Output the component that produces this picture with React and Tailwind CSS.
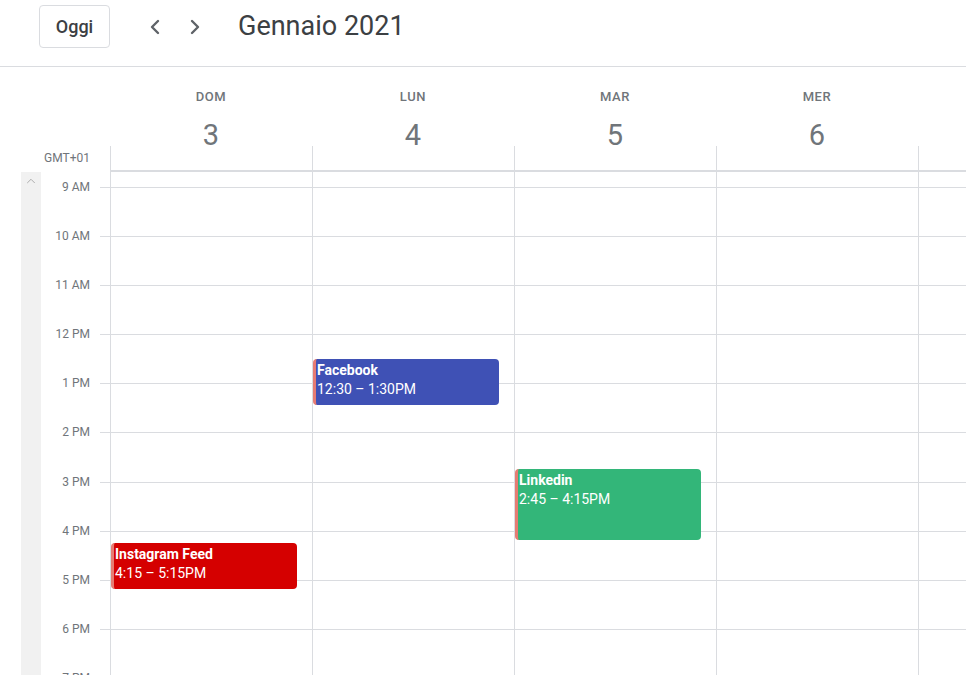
import React from 'react';
import { ChevronLeft, ChevronRight, ChevronUp } from 'lucide-react';

const HOUR = 49.1;

const days = [
    { label: 'DOM', num: 3 },
    { label: 'LUN', num: 4 },
    { label: 'MAR', num: 5 },
    { label: 'MER', num: 6 },
    { label: '', num: 7 }, // partly off screen, label not visible
];

const hours = ['9 AM', '10 AM', '11 AM', '12 PM', '1 PM', '2 PM', '3 PM', '4 PM', '5 PM', '6 PM', '7 PM'];

const events = [
    { day: 0, title: 'Instagram Feed', time: '4:15 – 5:15PM', start: 16.25, dur: 1, bg: 'bg-[#d50000]' },
    { day: 1, title: 'Facebook', time: '12:30 – 1:30PM', start: 12.5, dur: 1, bg: 'bg-[#3f51b5]' },
    { day: 2, title: 'Linkedin', time: '2:45 – 4:15PM', start: 14.75, dur: 1.5, bg: 'bg-[#33b679]' },
];

const EventCard = ({ ev }) => (
    <div
        className={`absolute left-0 w-[186px] rounded-[4px] border-l-[3px] border-[#e67c73] ${ev.bg} pl-[1px] pt-[2px] text-white text-[14px] leading-[19px]`}
        style={{ top: 15 + (ev.start - 9) * HOUR, height: ev.dur * HOUR - 3 }}
    >
        <div className="font-bold">{ev.title}</div>
        <div>{ev.time}</div>
    </div>
);

export default function App() {
    return (
        <div className="w-[966px] h-[675px] overflow-hidden bg-white font-['Roboto',sans-serif] text-[#3c4043]">
            {/* Top bar */}
            <div className="h-[67px] flex items-center pb-[13px] border-b border-[#dadce0]">
                <button className="ml-[39px] w-[71px] h-[43px] border border-[#dadce0] rounded-[4px] text-[18px] font-medium text-[#3c4043]">
                    Oggi
                </button>
                <div className="ml-[25px] flex items-center">
                    <span className="w-[40px] h-[40px] flex items-center justify-center text-[#5f6368]">
                        <ChevronLeft size={24} strokeWidth={2.4} />
                    </span>
                    <span className="w-[40px] h-[40px] flex items-center justify-center text-[#5f6368]">
                        <ChevronRight size={24} strokeWidth={2.4} />
                    </span>
                </div>
                <h1 className="ml-[23px] text-[27px] font-normal text-[#3c4043] leading-none">Gennaio 2021</h1>
            </div>

            {/* Day header */}
            <div className="flex h-[79px] whitespace-nowrap">
                <div className="w-[110px] shrink-0" />
                {days.filter(d => d.label).map(d => (
                    <div key={d.num} className="w-[202px] shrink-0 flex flex-col items-center">
                        <div className="mt-[23px] text-[13px] leading-[14px] font-medium tracking-[0.6px] text-[#70757a]">{d.label}</div>
                        <div className="mt-[17px] text-[29px] leading-[29px] text-[#70757a]">{d.num}</div>
                    </div>
                ))}
            </div>
            <div className="flex h-[26px] whitespace-nowrap">
                <div className="w-[110px] shrink-0 pr-[20px] text-right text-[12px] leading-[24px] text-[#70757a]">GMT+01</div>
                {days.map(d => (
                    <div key={d.num} className="w-[202px] shrink-0 border-l border-b-2 border-[#dadce0]" />
                ))}
            </div>

            {/* Grid body */}
            <div className="flex whitespace-nowrap">
                <div className="w-[110px] shrink-0 flex">
                    <div className="ml-[21px] w-[20px] h-[520px] bg-[#f1f1f1] flex justify-center pt-[2px]">
                        <ChevronUp size={14} strokeWidth={1.6} className="text-[#a8a8a8]" />
                    </div>
                    <div className="flex-1 pt-[15px]">
                        {hours.map(h => (
                            <div key={h} className="h-[49.1px] flex items-start">
                                <span className="w-[49px] -mt-[8px] text-right text-[12px] leading-[16px] text-[#70757a]">{h}</span>
                                <div className="ml-auto w-[10px] border-t border-[#dadce0]" />
                            </div>
                        ))}
                    </div>
                </div>
                {days.map((d, i) => (
                    <div key={d.num} className="relative w-[202px] shrink-0 border-l border-[#dadce0] pt-[15px]">
                        {hours.map(h => (
                            <div key={h} className="h-[49.1px] border-t border-[#dadce0]" />
                        ))}
                        {events.filter(ev => ev.day === i).map(ev => (
                            <EventCard key={ev.title} ev={ev} />
                        ))}
                    </div>
                ))}
            </div>
        </div>
    );
}
